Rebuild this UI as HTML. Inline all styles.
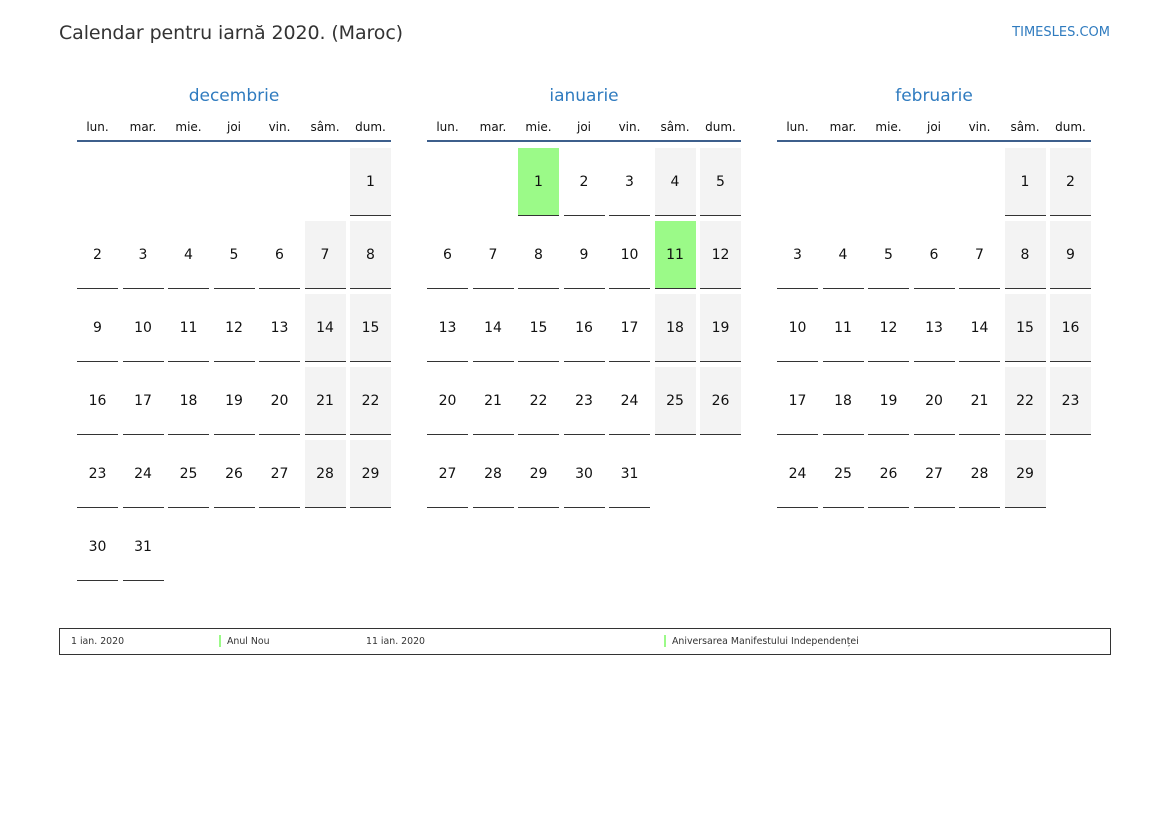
<!DOCTYPE html>
<html><head><meta charset="utf-8"><style>
*{margin:0;padding:0;box-sizing:border-box}
body{width:1169px;height:827px;background:#fff;font-family:"DejaVu Sans","Liberation Sans",sans-serif;position:relative;overflow:hidden;color:#111}
.title{position:absolute;left:59px;top:22px;font-size:19px;color:#333;letter-spacing:-0.1px}
.site{position:absolute;right:59px;top:25px;font-size:13px;color:#2f7bbf}
.m{position:absolute;top:86px;width:314px}
.mn{text-align:center;font-size:17px;color:#2f7bbf;height:34px}
.dn{display:grid;grid-template-columns:repeat(7,41px);column-gap:4.5px;font-size:12px;text-align:center;height:22px;border-bottom:2px solid #3d5f8c}
.g{display:grid;grid-template-columns:repeat(7,41px);column-gap:4.5px;row-gap:5px;grid-auto-rows:68px;margin-top:6px}
.g div{border-bottom:1px solid #333;display:flex;align-items:center;justify-content:center;font-size:14px}
.g .e{border:none}
.g .w{background:#f3f3f3}
.g .h{background:#9bfa88}
.lg{position:absolute;left:59px;top:628px;width:1052px;height:27px;border:1px solid #333;font-size:9.4px;color:#333}
.lg span{position:absolute;top:7px;white-space:nowrap}
.bar{position:absolute;top:6px;width:2px;height:12px;background:#9bfa88}
</style></head><body>
<div class="title">Calendar pentru iarnă 2020. (Maroc)</div>
<div class="site">TIMESLES.COM</div>

<div class="m" style="left:77px">
<div class="mn">decembrie</div>
<div class="dn"><span>lun.</span><span>mar.</span><span>mie.</span><span>joi</span><span>vin.</span><span>sâm.</span><span>dum.</span></div>
<div class="g">
<div class="e"></div><div class="e"></div><div class="e"></div><div class="e"></div><div class="e"></div><div class="e"></div><div class="w">1</div>
<div>2</div><div>3</div><div>4</div><div>5</div><div>6</div><div class="w">7</div><div class="w">8</div>
<div>9</div><div>10</div><div>11</div><div>12</div><div>13</div><div class="w">14</div><div class="w">15</div>
<div>16</div><div>17</div><div>18</div><div>19</div><div>20</div><div class="w">21</div><div class="w">22</div>
<div>23</div><div>24</div><div>25</div><div>26</div><div>27</div><div class="w">28</div><div class="w">29</div>
<div>30</div><div>31</div>
</div></div>

<div class="m" style="left:427px">
<div class="mn">ianuarie</div>
<div class="dn"><span>lun.</span><span>mar.</span><span>mie.</span><span>joi</span><span>vin.</span><span>sâm.</span><span>dum.</span></div>
<div class="g">
<div class="e"></div><div class="e"></div><div class="h">1</div><div>2</div><div>3</div><div class="w">4</div><div class="w">5</div>
<div>6</div><div>7</div><div>8</div><div>9</div><div>10</div><div class="h">11</div><div class="w">12</div>
<div>13</div><div>14</div><div>15</div><div>16</div><div>17</div><div class="w">18</div><div class="w">19</div>
<div>20</div><div>21</div><div>22</div><div>23</div><div>24</div><div class="w">25</div><div class="w">26</div>
<div>27</div><div>28</div><div>29</div><div>30</div><div>31</div>
</div></div>

<div class="m" style="left:777px">
<div class="mn">februarie</div>
<div class="dn"><span>lun.</span><span>mar.</span><span>mie.</span><span>joi</span><span>vin.</span><span>sâm.</span><span>dum.</span></div>
<div class="g">
<div class="e"></div><div class="e"></div><div class="e"></div><div class="e"></div><div class="e"></div><div class="w">1</div><div class="w">2</div>
<div>3</div><div>4</div><div>5</div><div>6</div><div>7</div><div class="w">8</div><div class="w">9</div>
<div>10</div><div>11</div><div>12</div><div>13</div><div>14</div><div class="w">15</div><div class="w">16</div>
<div>17</div><div>18</div><div>19</div><div>20</div><div>21</div><div class="w">22</div><div class="w">23</div>
<div>24</div><div>25</div><div>26</div><div>27</div><div>28</div><div class="w">29</div>
</div></div>

<div class="lg">
<span style="left:11px">1 ian. 2020</span>
<div class="bar" style="left:159px"></div><span style="left:167px">Anul Nou</span>
<span style="left:306px">11 ian. 2020</span>
<div class="bar" style="left:604px"></div><span style="left:612px">Aniversarea Manifestului Independenței</span>
</div>
</body></html>
